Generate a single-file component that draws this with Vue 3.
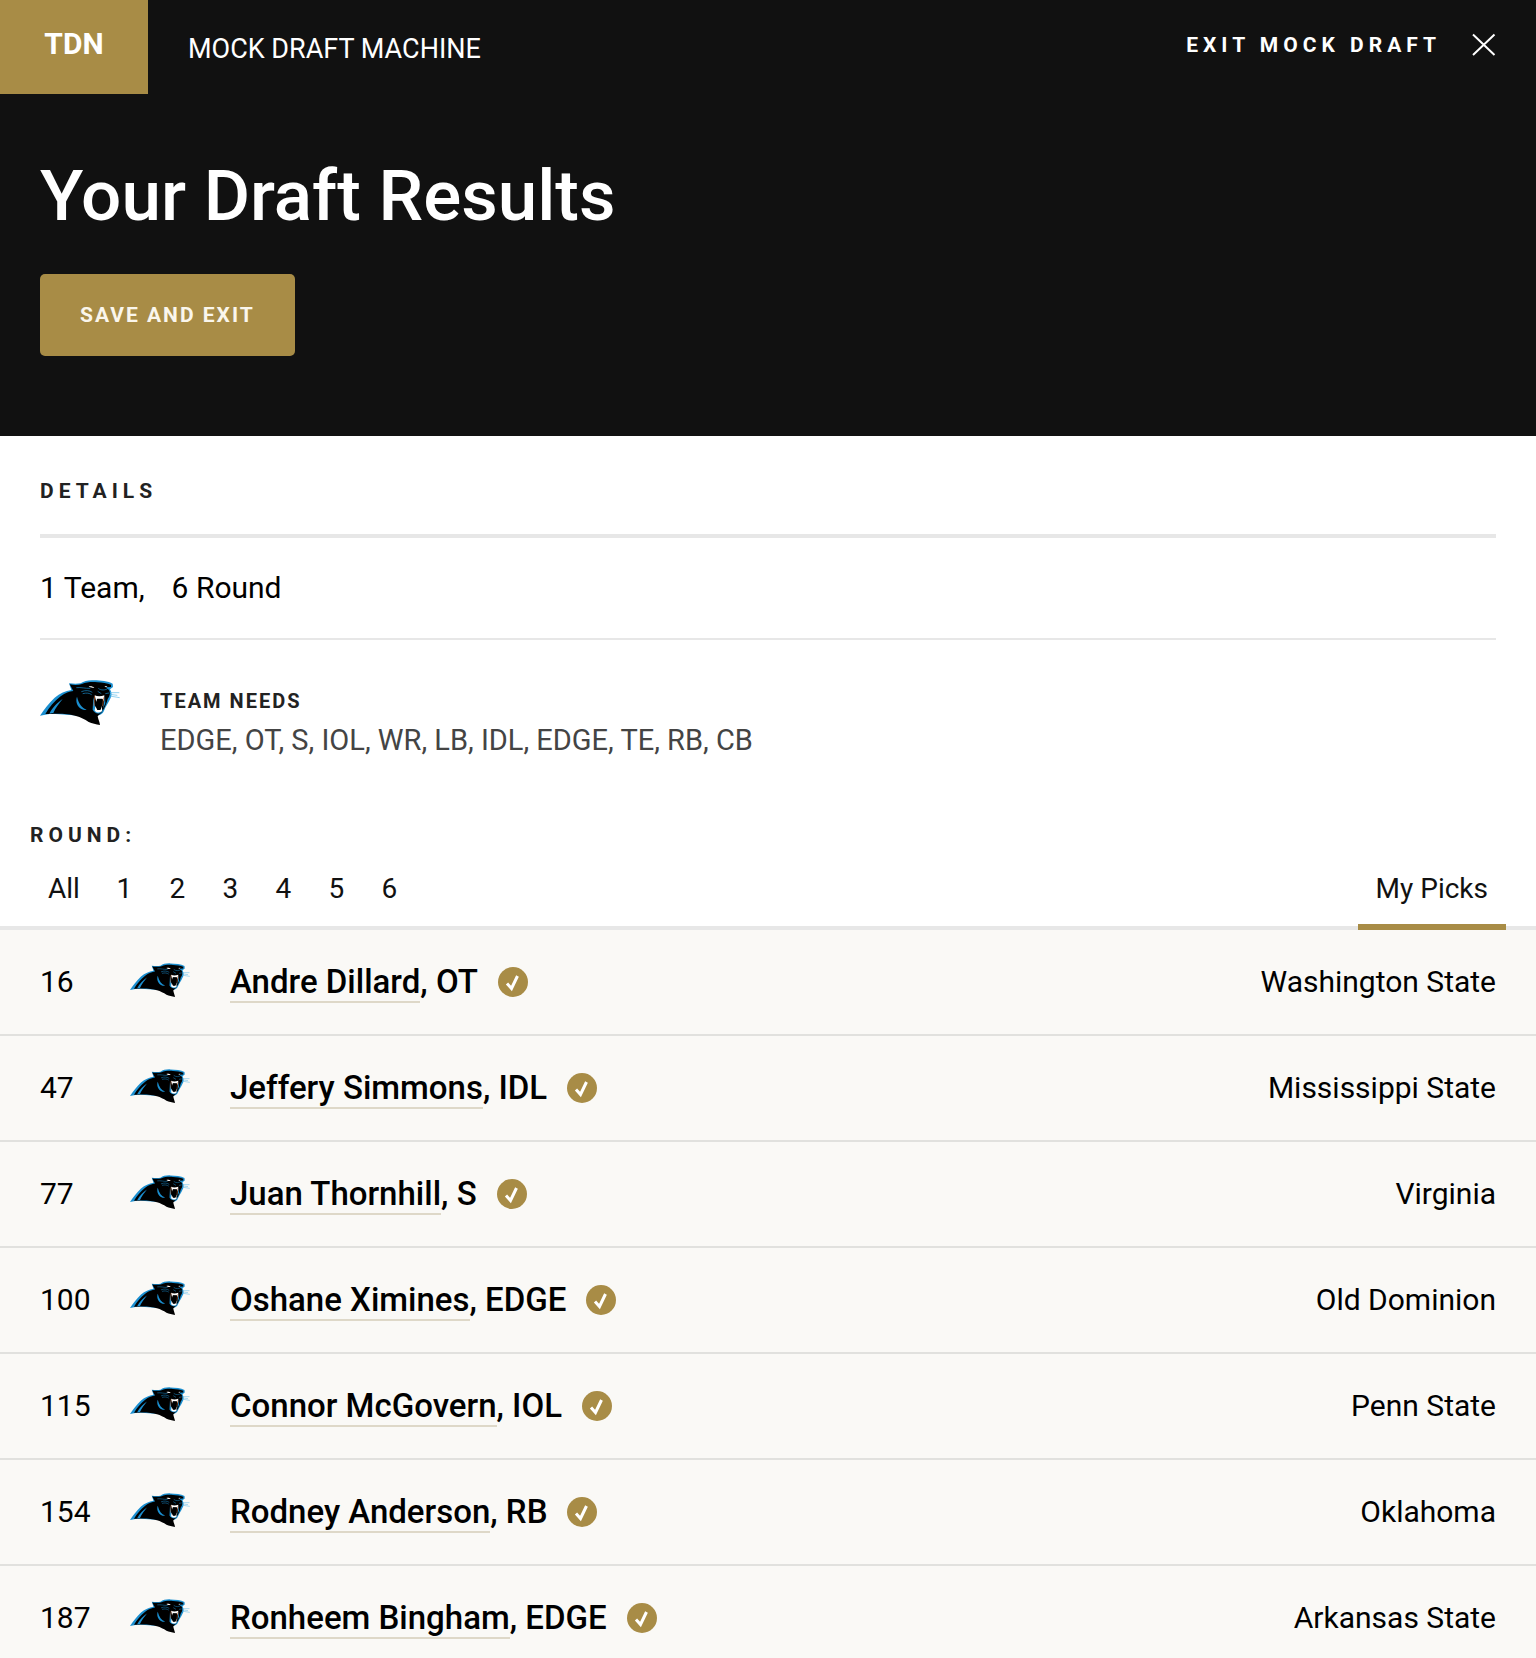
<template>
  <div class="draft">
    <!-- Shared artwork for the team logo -->
    <svg class="sprite" aria-hidden="true">
      <symbol id="panther" viewBox="30 42 240 135">
        <path fill="#1b8fd0" d="M30 149C44 128 56 112 74 95C90 82 106 75 124 72L117 52C132 54 142 54 152 52C162 45 176 42 192 43C212 43 234 46 248 53L249 63L240 70C247 82 245 92 240 100C235 112 227 121 222 134C219 143 211 147 204 148L190 152L90 145L62 143Z" />
        <path fill="#000" d="M46 144C58 124 72 106 92 91C106 80 118 77 130 75L119 55C134 58 146 57 156 54C170 48 188 47 202 49C216 49 232 52 243 56L243 63L228 64L237 72C242 82 239 92 233 99C230 112 224 125 218 134C213 143 206 146 203 151C205 162 209 168 210 177C198 175 186 172 176 168C164 160 152 154 138 150C118 143 80 142 62 144Z" />
        <path fill="#1b8fd0" d="M141 92C136 106 141 122 156 130C160 132 166 133 170 131C156 126 146 113 141 92Z" />
        <path fill="#1b8fd0" d="M58 143C68 124 84 108 98 99C88 112 76 126 70 141Z" />
        <path fill="none" stroke="#1b8fd0" stroke-width="2" d="M139 65C154 63 165 68 181 67M154 77C167 72 178 73 187 79M158 83C170 80 178 81 185 86M205 67C213 74 226 73 234 67M203 76L214 83M226 83L237 81" />
        <path fill="#fff" d="M176 61C184 60 190 62 193 65C186 66 180 65 176 61ZM223 61L232 60L228 64Z" />
        <path fill="#1b8fd0" d="M190 93L188 131C194 143 208 146 215 137L226 112L225 92L218 136L198 137Z" />
        <path fill="#fff" d="M194 88C202 92 213 92 223 88L222 106L217 98L202 98L199 108ZM196 120L202 132L211 132L216 119L216 136C210 141 200 141 194 134Z" />
        <path fill="#000" d="M201 99L217 100L213 130L203 130L198 119Z" />
        <path fill="none" stroke="#c4622d" stroke-width="2" d="M194 90L192 120M221 94L218 120" />
        <path fill="none" stroke="#5bb9e8" stroke-width="2" d="M240 80L268 80M240 85L262 88M239 90L269 95" />
      </symbol>
    </svg>

    <header class="hero">
      <div class="topbar">
        <a class="brand" href="#">TDN</a>
        <span class="app-name">MOCK DRAFT MACHINE</span>
        <a class="exit" href="#">
          EXIT MOCK DRAFT
          <svg class="exit-icon" viewBox="0 0 24 24" aria-hidden="true">
            <path d="M1 1.500L22.500 22M22.500 1.500L1 22" />
          </svg>
        </a>
      </div>
      <div class="hero-body">
        <h1>Your Draft Results</h1>
        <button class="save" type="button">SAVE AND EXIT</button>
      </div>
    </header>

    <main>
      <section class="details">
        <h2 class="label wide">DETAILS</h2>
        <p class="summary"><span>1 Team,</span><span>6 Round</span></p>
        <div class="team">
          <svg class="team-logo" role="img" aria-label="Carolina Panthers"><use href="#panther" /></svg>
          <div class="team-text">
            <h3 class="label">TEAM NEEDS</h3>
            <p class="needs">{{ needs.join(', ') }}</p>
          </div>
        </div>
      </section>

      <h2 class="label wide round-label">ROUND:</h2>
      <nav class="tabs">
        <button
          v-for="tab in tabs"
          :key="tab"
          type="button"
          class="tab"
          :class="{ active: tab === activeTab }"
          @click="activeTab = tab"
        >{{ tab }}</button>
      </nav>

      <table class="picks">
        <tbody>
          <tr v-for="pick in picks" :key="pick.number">
            <td class="number">{{ pick.number }}</td>
            <td class="logo">
              <svg class="pick-logo" role="img" aria-label="Carolina Panthers"><use href="#panther" /></svg>
            </td>
            <td>
              <div class="player">
                <span><a href="#">{{ pick.player }}</a>, {{ pick.position }}</span>
                <svg class="check" viewBox="0 0 30 30" aria-hidden="true">
                  <circle cx="15" cy="15" r="15" />
                  <path d="M9 16.500L13.500 21.500L19.500 9" />
                </svg>
              </div>
            </td>
            <td class="school">{{ pick.school }}</td>
          </tr>
        </tbody>
      </table>
    </main>
  </div>
</template>

<script setup>
import { ref } from 'vue';

const needs = ['EDGE', 'OT', 'S', 'IOL', 'WR', 'LB', 'IDL', 'EDGE', 'TE', 'RB', 'CB'];

const tabs = ['All', '1', '2', '3', '4', '5', '6', 'My Picks'];
const activeTab = ref('My Picks');

const picks = [
  { number: 16, player: 'Andre Dillard', position: 'OT', school: 'Washington State' },
  { number: 47, player: 'Jeffery Simmons', position: 'IDL', school: 'Mississippi State' },
  { number: 77, player: 'Juan Thornhill', position: 'S', school: 'Virginia' },
  { number: 100, player: 'Oshane Ximines', position: 'EDGE', school: 'Old Dominion' },
  { number: 115, player: 'Connor McGovern', position: 'IOL', school: 'Penn State' },
  { number: 154, player: 'Rodney Anderson', position: 'RB', school: 'Oklahoma' },
  { number: 187, player: 'Ronheem Bingham', position: 'EDGE', school: 'Arkansas State' },
];
</script>

<style>
body {
  margin: 0;
  background: #fff;
}
</style>

<style scoped>
.draft {
  font-family: Roboto, 'Liberation Sans', sans-serif;
  font-size: 30px;
  line-height: 40px;
  color: #000;
}

.sprite {
  position: absolute;
  width: 0;
  height: 0;
}

h1,
h2,
h3,
p {
  margin: 0;
}

a {
  color: inherit;
  text-decoration: none;
}

button {
  border: 0;
  font-family: inherit;
  cursor: pointer;
}

.hero {
  background: #111;
  color: #fff;
}

.topbar {
  display: flex;
  align-items: flex-start;
  padding-right: 40px;
}

.brand {
  box-sizing: border-box;
  width: 148px;
  height: 94px;
  padding-top: 24px;
  background: #a88c46;
  font-size: 30px;
  font-weight: 700;
  text-align: center;
}

.app-name {
  padding: 29px 0 0 40px;
  font-size: 27px;
}

.exit {
  display: flex;
  align-items: center;
  gap: 31px;
  margin-left: auto;
  padding-top: 25px;
  font-size: 21px;
  font-weight: 700;
  letter-spacing: 5px;
}

.exit-icon {
  width: 24px;
  height: 24px;
  fill: none;
  stroke: #fff;
  stroke-width: 2;
}

.hero-body {
  padding: 62px 40px 80px;
}

h1 {
  font-size: 71px;
  font-weight: 500;
  line-height: 80px;
}

.save {
  display: block;
  height: 82px;
  margin-top: 38px;
  padding: 0 40px;
  border-radius: 5px;
  background: #a88c46;
  color: #faf6ec;
  font-size: 21px;
  font-weight: 700;
  letter-spacing: 2px;
}

.label {
  color: #222;
  font-size: 20px;
  font-weight: 700;
  line-height: 24px;
  letter-spacing: 2px;
}

.wide {
  font-size: 21px;
  letter-spacing: 5px;
}

.details {
  padding: 0 40px;
}

.details .wide {
  padding: 43px 0 31px;
  border-bottom: 4px solid #e7e7e7;
}

.summary {
  display: flex;
  gap: 27px;
  padding: 30px 0;
  border-bottom: 2px solid #e7e7e7;
}

.team {
  display: flex;
  gap: 40px;
  padding-top: 40px;
}

.team-logo {
  width: 80px;
  height: 45px;
}

.team-text {
  padding-top: 9px;
}

.needs {
  margin-top: 7px;
  color: #444;
  font-size: 29px;
}

.round-label {
  padding: 63px 30px 0;
}

.tabs {
  display: flex;
  margin-top: 22px;
  padding: 0 30px;
  box-shadow: inset 0 -4px #e7e7e7;
}

.tab {
  min-width: 53px;
  padding: 0 18px 15px;
  border-bottom: 6px solid transparent;
  background: none;
  color: #111;
  font-size: 28px;
  line-height: 40px;
}

.tab:last-child {
  margin-left: auto;
}

.tab.active {
  border-color: #a88c46;
}

.picks {
  width: 100%;
  border-spacing: 0;
  background: #faf9f6;
}

.picks td {
  padding: 32px 0;
  border-bottom: 2px solid #e1e1de;
}

.picks .number {
  width: 90px;
  padding-left: 40px;
}

.picks .logo {
  width: 100px;
  padding: 30px 0 34px;
}

.pick-logo {
  display: block;
  width: 60px;
  height: 34px;
}

.player {
  display: flex;
  align-items: center;
  gap: 20px;
  font-size: 33px;
  font-weight: 500;
}

.player a {
  border-bottom: 2px solid #ded8c8;
}

.check {
  width: 30px;
  height: 30px;
  fill: #a88c46;
}

.check path {
  fill: none;
  stroke: #fff;
  stroke-width: 3;
}

.picks .school {
  padding-right: 40px;
  text-align: right;
}
</style>
